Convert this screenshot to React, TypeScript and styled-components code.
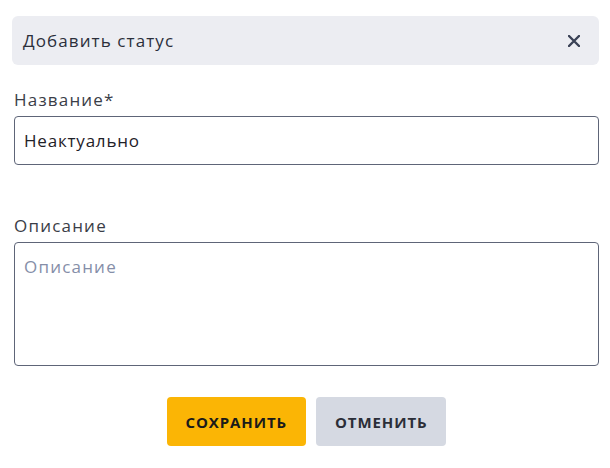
import React from 'react';
import styled, { createGlobalStyle } from 'styled-components';

const GlobalStyle = createGlobalStyle`
  body {
    margin: 0;
    background: #ffffff;
    font-family: 'Open Sans', 'Noto Sans', sans-serif;
  }
`;

const Modal = styled.div`
  width: 585px;
  margin-left: 14px;
  padding-top: 16px;
  display: flex;
  flex-direction: column;
`;

const Header = styled.div`
  height: 49px;
  margin-left: -2px;
  padding: 0 19px 0 11px;
  background: #ecedf2;
  border-radius: 6px;
  display: flex;
  align-items: center;
  justify-content: space-between;
`;

const Title = styled.span`
  font-size: 17px;
  color: #2b2f3b;
  letter-spacing: 1.1px;
`;

const CloseButton = styled.button`
  border: none;
  background: none;
  padding: 0;
  width: 12px;
  height: 12px;
  display: flex;
  cursor: pointer;
`;

const Field = styled.label<{ gap: number }>`
  display: flex;
  flex-direction: column;
  margin-top: ${({ gap }) => gap}px;
`;

const Label = styled.span`
  font-size: 17px;
  line-height: 20px;
  color: #3a3d47;
  margin-bottom: 6px;
  letter-spacing: 1.2px;
`;

const TextInput = styled.input`
  box-sizing: border-box;
  height: 49px;
  border: 1px solid #5e6578;
  border-radius: 4px;
  padding: 0 9px;
  font-family: inherit;
  font-size: 17px;
  color: #1f2128;
  letter-spacing: 0.8px;
  outline: none;
`;

const TextArea = styled.textarea`
  box-sizing: border-box;
  height: 124px;
  border: 1px solid #5e6578;
  border-radius: 4px;
  padding: 12px 9px;
  font-family: inherit;
  font-size: 17px;
  letter-spacing: 1.2px;
  resize: none;
  outline: none;
  &::placeholder {
    color: #858ea8;
  }
`;

const Actions = styled.div`
  margin-top: 31px;
  display: flex;
  justify-content: center;
  gap: 10px;
`;

const Button = styled.button<{ variant: 'primary' | 'secondary' }>`
  height: 49px;
  border: none;
  border-radius: 4px;
  padding: 0 19px;
  font-family: inherit;
  font-size: 15px;
  font-weight: 700;
  letter-spacing: 0.9px;
  text-transform: uppercase;
  cursor: pointer;
  background: ${({ variant }) => (variant === 'primary' ? '#fbb505' : '#d5d9e2')};
  color: ${({ variant }) => (variant === 'primary' ? '#1a1a1a' : '#2b2e38')};
`;

export default function App() {
  return (
    <>
      <GlobalStyle />
      <Modal>
        <Header>
          <Title>Добавить статус</Title>
          <CloseButton aria-label="Закрыть">
            <svg width="12" height="12" viewBox="0 0 12 12">
              <path d="M1 1L11 11M11 1L1 11" stroke="#3a4256" strokeWidth="2.4" strokeLinecap="round" />
            </svg>
          </CloseButton>
        </Header>
        <Field gap={25}>
          <Label>Название*</Label>
          <TextInput defaultValue="Неактуально" />
        </Field>
        <Field gap={51}>
          <Label>Описание</Label>
          <TextArea placeholder="Описание" />
        </Field>
        <Actions>
          <Button variant="primary">Сохранить</Button>
          <Button variant="secondary">Отменить</Button>
        </Actions>
      </Modal>
    </>
  );
}
